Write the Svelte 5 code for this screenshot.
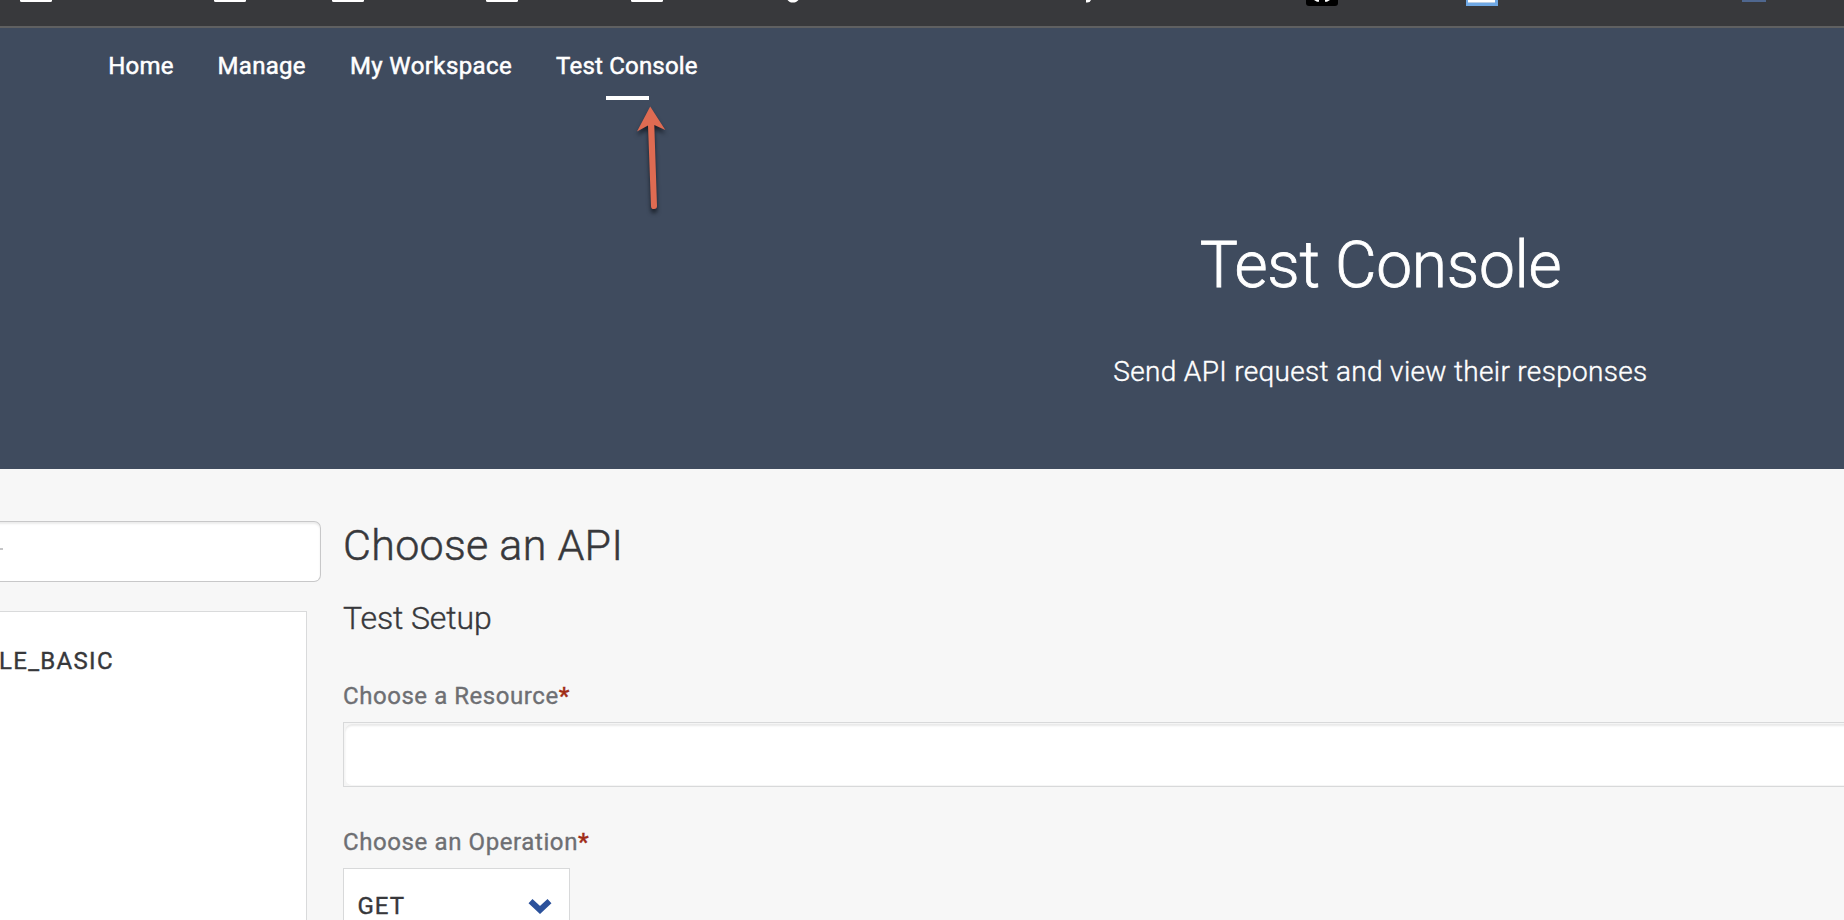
<script>
  const folders = [20, 214, 332, 486, 631];
  const nav = [
    { label: 'Home', spacing: 0.2 },
    { label: 'Manage', spacing: 0.3 },
    { label: 'My Workspace', spacing: 0.4 },
    { label: 'Test Console', spacing: 0.2, active: true }
  ];
</script>

<div class="page">
  <div class="bookmarks">
    <svg width="1844" height="26" viewBox="0 0 1844 26">
      {#each folders as x}
        <path d="M{x} 0h32v0.5q0 1.5 -1.5 1.5h-29q-1.5 0 -1.5 -1.5z" fill="#fff" />
      {/each}
      <path d="M787.5 0c1.2 1.6 3 2.6 5.300 2.6s4.400-1 5.700-2.600z" fill="#fff" />
      <path d="M1086 0v2.500q4 .6 5-2.500z" fill="#fff" />
      <path d="M1306 0h32v3q0 3-3 3h-26q-3 0-3-3z" fill="#000" />
      <path d="M1314 0h5v1.800h-2zM1325 0h5l-3 1.800h-2z" fill="#fff" />
      <path d="M1466 0h32v6h-32z" fill="#70a9e5" />
      <path d="M1468 0h27v2h-27z" fill="#fff" />
      <path d="M1468 2h27v1h-27z" fill="#b9cfe8" />
      <path d="M1742 0h24v2h-24z" fill="#4f678f" />
    </svg>
  </div>

  <header class="hero">
    <nav>
      {#each nav as item}
        <a class:active={item.active} style="letter-spacing: {item.spacing}px">{item.label}</a>
      {/each}
    </nav>
    <div class="intro">
      <h1>Test Console</h1>
      <p>Send API request and view their responses</p>
    </div>
    <svg class="arrow" width="50" height="126" viewBox="625 96 50 126">
      <path fill="#df6b52" d="M650.200 106.500L665.300 130L654.300 125L657 206a3 3 0 0 1-6 .2L648 125.500L637 131.500Z" />
    </svg>
  </header>

  <main>
    <aside>
      <div class="search"><span></span></div>
      <div class="list"><span>LE_BASIC</span></div>
    </aside>
    <section>
      <h2>Choose an API</h2>
      <h3>Test Setup</h3>
      <div class="label resource">Choose a Resource<b>*</b></div>
      <div class="input"><div></div></div>
      <div class="label operation">Choose an Operation<b>*</b></div>
      <div class="select">
        <span>GET</span>
        <svg width="24" height="17" viewBox="0 0 24 17">
          <path d="M2.500 3.200L12 12L21.500 3.200" fill="none" stroke="#2b519b" stroke-width="5.800" />
        </svg>
      </div>
    </section>
  </main>
</div>

<style>
  :global(body) { margin: 0; overflow: hidden; }
  .page {
    width: 1844px;
    height: 920px;
    overflow: hidden;
    background: #f7f7f7;
    font-family: Roboto, "Liberation Sans", sans-serif;
    font-weight: 400;
    color: #37383b;
  }
  .bookmarks {
    height: 26px;
    background: #38393c;
    border-bottom: 2px solid #5f6061;
  }
  .bookmarks svg { display: block; }
  .hero {
    position: relative;
    box-sizing: border-box;
    height: 441px;
    padding-top: 24px;
    background: #3f4b5e;
    color: #fff;
  }
  nav {
    display: flex;
    gap: 44px;
    padding-left: 108.200px;
    height: 48px;
    font-size: 24px;
    line-height: 28px;
    -webkit-text-stroke: 0.5px #fff;
  }
  nav a { position: relative; white-space: nowrap; }
  .active::after {
    content: "";
    position: absolute;
    left: 50px;
    top: 44px;
    width: 43px;
    height: 4px;
    background: #fff;
  }
  .intro {
    margin-top: 128px;
    margin-left: 917px;
    text-align: center;
  }
  h1, h2, h3, p { margin: 0; }
  h1 {
    font-size: 64px;
    line-height: 76px;
    font-weight: 300;
    letter-spacing: -0.3px;
    -webkit-text-stroke: 0.8px #fff;
  }
  p {
    margin-top: 51px;
    font-size: 28px;
    line-height: 34px;
    font-weight: 300;
    letter-spacing: 0.330px;
    -webkit-text-stroke: 0.4px #fff;
  }
  .arrow {
    position: absolute;
    left: 625px;
    top: 68px;
    filter: drop-shadow(0 4px 2px rgba(15, 20, 28, 0.8));
  }
  main { display: flex; height: 451px; }
  aside { width: 343px; flex: none; }
  .search {
    box-sizing: border-box;
    width: 331px;
    height: 61px;
    margin: 52px 0 0 -10px;
    padding-left: 10px;
    border: 1px solid #c8c8c9;
    border-left: 0;
    border-radius: 0 7px 7px 0;
    background: #fff;
    box-shadow: inset 0 2px 2px #ececec;
  }
  .search span {
    display: block;
    width: 3px;
    height: 2px;
    margin-top: 26px;
    background: #c5c5c7;
  }
  .list {
    box-sizing: border-box;
    width: 307px;
    height: 320px;
    margin-top: 29px;
    padding-top: 35px;
    border: 1px solid #d9dadb;
    border-left: 0;
    background: #fff;
    font-size: 24px;
    line-height: 28px;
    letter-spacing: 1.300px;
    -webkit-text-stroke: 0.4px #37383b;
  }
  .list span { margin-left: -1px; }
  section { flex: 1; }
  h2 {
    margin-top: 51px;
    font-size: 43px;
    line-height: 50px;
    font-weight: 300;
    letter-spacing: 0.3px;
    -webkit-text-stroke: 0.5px #37383b;
  }
  h3 {
    margin-top: 29px;
    font-size: 32px;
    line-height: 38px;
    font-weight: 300;
    letter-spacing: -0.1px;
    -webkit-text-stroke: 0.4px #37383b;
  }
  .label {
    font-size: 24px;
    line-height: 28px;
    color: #6e6f73;
    -webkit-text-stroke: 0.35px currentColor;
  }
  .label b { font-weight: 500; color: #a02c16; letter-spacing: 0; }
  .resource { margin-top: 45px; letter-spacing: 0.55px; }
  .operation { margin-top: 41px; letter-spacing: 0.6px; }
  .input {
    box-sizing: border-box;
    height: 65px;
    margin-top: 12px;
    padding: 1px 0 1px 1px;
    border: 1px solid #d8d9da;
    border-right: 0;
    background: #f5f5f5;
  }
  .input div {
    height: 61px;
    margin-right: -10px;
    border-radius: 7px 0 0 7px;
    background: #fff;
    box-shadow: inset 0 2px 2px #e9e9e9;
  }
  .select {
    box-sizing: border-box;
    display: flex;
    justify-content: space-between;
    width: 227px;
    height: 65px;
    margin-top: 12px;
    padding: 23px 17px 0 13.500px;
    border: 1px solid #d8d9da;
    background: #fff;
    font-size: 24px;
    line-height: 28px;
    letter-spacing: 1px;
    -webkit-text-stroke: 0.4px #37383b;
  }
  .select svg { margin-top: 6px; }
</style>
